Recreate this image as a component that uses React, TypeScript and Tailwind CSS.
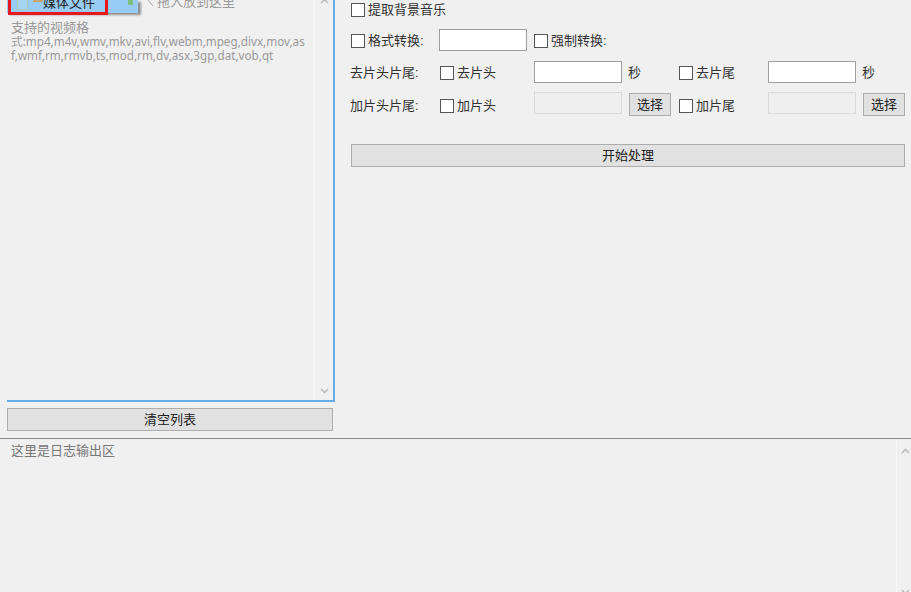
const cjk = "font-['Liberation_Sans','Noto_Sans_CJK_SC',sans-serif]";

function Check({ label, className = '' }: { label: string; className?: string }) {
  return (
    <label className={`flex items-center gap-[3px] ${className}`}>
      <span className="h-[14px] w-[14px] shrink-0 border border-[#555] bg-white" />
      <span>{label}</span>
    </label>
  );
}

function Field({ disabled = false }: { disabled?: boolean }) {
  return (
    <div
      className={`h-[22px] w-[88px] shrink-0 border ${
        disabled ? 'self-start border-[#d9d9d9] bg-[#efefef]' : 'border-[#a0a0a0] bg-white'
      }`}
    />
  );
}

function PickButton() {
  return (
    <button className="mt-[1px] ml-[7px] h-[23px] w-[42px] shrink-0 self-start border border-[#adadad] bg-[#e1e1e1] text-center text-[#222]">
      选择
    </button>
  );
}

function Chevron({ up = false, className = '' }: { up?: boolean; className?: string }) {
  return (
    <svg className={className} width="9" height="6" viewBox="0 0 9 6" fill="none" stroke="currentColor" strokeWidth="1.3">
      <path d={up ? 'M1 5l3.5-3.5L8 5' : 'M1 1l3.5 3.5L8 1'} />
    </svg>
  );
}

export default function App() {
  return (
    <div className={`${cjk} flex h-[592px] w-[911px] flex-col overflow-hidden bg-[#f0f0f0] text-[13px] leading-[18px] text-[#333]`}>
      <div className="flex h-[438px] shrink-0 pl-[7px]">
        <div className="w-[328px] shrink-0">
          <div className="flex h-[402px] border-r-2 border-b-2 border-[#66ade8]">
            <div className="relative min-w-0 flex-1">
              {/* drag hint, cut off by the top of the shot */}
              <div className="absolute top-0 left-0 h-[13px] w-[131px] bg-[#99ccf5] shadow-[3px_2px_2px_rgba(0,0,0,0.4)]">
                <div className="absolute top-0 left-[1px] h-[15px] w-[100px] rounded-b-[1px] border-[3px] border-t-0 border-[#e8171c]" />
                <div className="absolute top-0 left-[10px] h-[10px] w-[11px] border border-t-0 border-[#a9c9c4] bg-[#a6d3ee]" />
                <div className="absolute top-0 left-[26px] h-[2px] w-[10px] bg-[#c9a679]" />
                <div className="absolute top-0 left-[121px] h-[5px] w-[5px] bg-[#7fc07f]" />
                <div className="absolute top-[-6px] left-[36px] whitespace-nowrap text-[#222]">媒体文件</div>
              </div>
              <svg className="absolute top-0 left-[140px] text-[#aaa]" width="7" height="7" viewBox="0 0 7 7" fill="none" stroke="currentColor">
                <path d="M1 0l5 6" />
              </svg>
              <div className="absolute top-[-7px] left-[150px] whitespace-nowrap text-[#999]">拖入放到这里</div>
              <div className="pt-[20px] pl-[4px] font-['Noto_Sans','Noto_Sans_CJK_SC',sans-serif] text-[11.7px] leading-[14px] text-[#999]">
                <div className="text-[13px]">支持的视频格</div>
                <div className="whitespace-nowrap">式:mp4,m4v,wmv,mkv,avi,flv,webm,mpeg,divx,mov,as</div>
                <div className="whitespace-nowrap">f,wmf,rm,rmvb,ts,mod,rm,dv,asx,3gp,dat,vob,qt</div>
              </div>
            </div>
            <div className="flex w-[19px] shrink-0 flex-col items-center justify-between border-l border-[#f8f8f8] pb-[6px] text-[#b5b5b5]">
              <Chevron up className="-mt-[2px]" />
              <Chevron />
            </div>
          </div>
          <button className="mt-[6px] h-[23px] w-[326px] border border-[#adadad] bg-[#e1e1e1] text-center text-[#222]">
            清空列表
          </button>
        </div>

        <div className="flex-1 pt-[1px] pl-[15px]">
          <Check label="提取背景音乐" className="h-[18px] pl-[1px]" />
          <div className="mt-[10px] flex h-[22px] items-center">
            <Check label="格式转换:" className="mt-[2px] w-[89px] pl-[1px]" />
            <Field />
            <Check label="强制转换:" className="mt-[2px] ml-[7px]" />
          </div>
          <div className="mt-[10px] flex h-[22px] items-center">
            <span className="mt-[2px] w-[90px]">去片头片尾:</span>
            <Check label="去片头" className="mt-[2px] w-[94px]" />
            <Field />
            <span className="mt-[2px] ml-[6px] w-[51px]">秒</span>
            <Check label="去片尾" className="mt-[2px] w-[89px]" />
            <Field />
            <span className="mt-[2px] ml-[6px]">秒</span>
          </div>
          <div className="mt-[9px] flex h-[26px] items-center">
            <span className="mt-[2px] w-[90px]">加片头片尾:</span>
            <Check label="加片头" className="mt-[2px] w-[94px]" />
            <Field disabled />
            <PickButton />
            <Check label="加片尾" className="mt-[2px] ml-[8px] w-[89px]" />
            <Field disabled />
            <PickButton />
          </div>
          <button className="mt-[26px] ml-[1px] h-[23px] w-[554px] border border-[#adadad] bg-[#e1e1e1] text-center text-[#222]">
            开始处理
          </button>
        </div>
      </div>

      <div className="flex min-h-0 flex-1 border-t border-[#8a8a8a] pl-[7px]">
        <div className="min-w-0 flex-1 pt-[3px] pl-[4px] text-[#777]">这里是日志输出区</div>
        <div className="flex w-[15px] shrink-0 flex-col items-start justify-between border-l border-[#f8f8f8] pt-[9px] pl-[4px] text-[#b5b5b5]">
          <Chevron up />
          <Chevron className="-mb-[3px]" />
        </div>
      </div>
    </div>
  );
}
